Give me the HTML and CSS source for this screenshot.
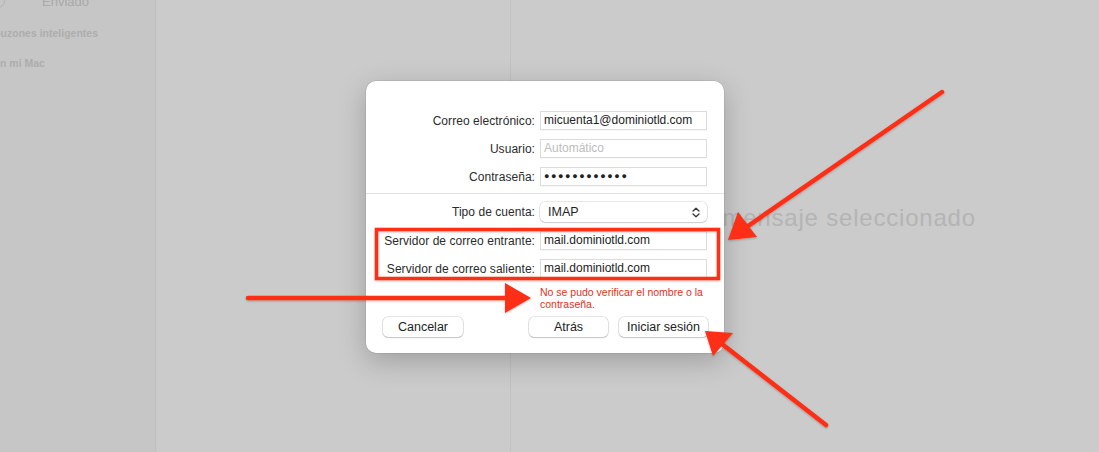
FILE: index.html
```html
<!DOCTYPE html>
<html lang="es">
<head>
  <meta charset="UTF-8">
  <meta name="viewport" content="width=device-width, initial-scale=1.0">
  <title>Mail - Añadir cuenta</title>
  <link rel="stylesheet" href="styles.css">
</head>
<body>
  <div class="app">
    <aside class="sidebar">
      <div class="side-item"><span class="side-icon"></span>Enviado</div>
      <div class="side-head">Buzones inteligentes</div>
      <div class="side-head">En mi Mac</div>
    </aside>
    <section class="list"></section>
    <main class="reader">
      <p class="empty">Ningún mensaje seleccionado</p>
    </main>
  </div>

  <div class="sheet">
    <div class="form form-top">
      <label>Correo electrónico:</label>
      <div class="field">micuenta1@dominiotld.com</div>
      <label>Usuario:</label>
      <div class="field placeholder">Automático</div>
      <label>Contraseña:</label>
      <div class="field dots">●●●●●●●●●●●●</div>
    </div>
    <div class="divider"></div>
    <div class="form form-bottom">
      <label>Tipo de cuenta:</label>
      <div class="select">
        <span>IMAP</span>
        <svg width="8" height="11" viewBox="0 0 8 11">
          <path d="M1 4 L4 1.2 L7 4 M1 7 L4 9.8 L7 7" fill="none" stroke="#333" stroke-width="1.3" stroke-linecap="round" stroke-linejoin="round"/>
        </svg>
      </div>
      <label>Servidor de correo entrante:</label>
      <div class="field">mail.dominiotld.com</div>
      <label>Servidor de correo saliente:</label>
      <div class="field">mail.dominiotld.com</div>
    </div>
    <p class="error">No se pudo verificar el nombre o la<br>contraseña.</p>
    <div class="actions">
      <button>Cancelar</button>
      <span class="spacer"></span>
      <button class="btn-back">Atrás</button>
      <button class="btn-login">Iniciar sesión</button>
    </div>
  </div>

  <!-- anotaciones en rojo -->
  <svg class="marks" width="1099" height="452" viewBox="0 0 1099 452">
    <defs>
      <filter id="sombra" x="-10%" y="-10%" width="120%" height="120%">
        <feDropShadow dx="0" dy="1" stdDeviation="1" flood-color="#000" flood-opacity="0.25"/>
      </filter>
    </defs>
    <g fill="#ff2d12" stroke="#ff2d12" filter="url(#sombra)">
      <rect x="376.5" y="229.5" width="342" height="49" fill="none" stroke-width="3.5"/>
      <line x1="942" y1="92" x2="748" y2="226" stroke-width="4.5" stroke-linecap="round"/>
      <polygon points="728,240 738,212 757,237" stroke="none"/>
      <line x1="248" y1="298" x2="507" y2="298" stroke-width="4.5" stroke-linecap="round"/>
      <polygon points="505,283 531,298 505,313" stroke="none"/>
      <line x1="826" y1="425" x2="722" y2="344" stroke-width="4.5" stroke-linecap="round"/>
      <polygon points="705,331 733,333 713,356" stroke="none"/>
    </g>
  </svg>
</body>
</html>
```

FILE: styles.css
```css
body {
  margin: 0;
  font-family: "Liberation Sans", Arial, sans-serif;
  background-color: #cbcbcb;
  overflow: hidden;
}
.app {
  display: flex;
  height: 452px;
}
.sidebar {
  width: 155px;
  background-color: #c6c6c6;
  border-right: 1px solid #bdbdbd;
  overflow: hidden;
}
.side-item {
  display: flex;
  align-items: center;
  gap: 37px;
  margin-top: -9px;
  margin-left: -9px;
  height: 20px;
  font-size: 13px;
  color: #a9a9a9;
}
.side-icon {
  width: 14px;
  height: 14px;
  border-radius: 50%;
  border: 1.5px solid #b3b3b3;
  box-sizing: border-box;
}
.side-head {
  margin-left: -7px;
  margin-top: 16px;
  font-size: 10.5px;
  font-weight: bold;
  color: #adadad;
}
.side-head + .side-head {
  margin-top: 18px;
}
.list {
  width: 354px;
  border-right: 1px solid #c0c0c0;
}
.reader {
  flex: 1;
  display: flex;
  align-items: center;
  justify-content: center;
  padding-bottom: 16px;
}
.empty {
  margin: 0;
  font-size: 24px;
  letter-spacing: 0.8px;
  color: #b4b4b4;
}

.sheet {
  position: absolute;
  left: 366px;
  top: 81px;
  width: 358px;
  background-color: #ffffff;
  border-radius: 10px;
  box-shadow: 0 0 0 0.5px rgba(0,0,0,0.12), 0 8px 28px rgba(0,0,0,0.22);
  padding-bottom: 16px;
}
.form {
  display: grid;
  grid-template-columns: 1fr 167px;
  column-gap: 5px;
  row-gap: 9px;
  align-items: center;
  padding-right: 17px;
}
.form-top {
  padding-top: 30px;
}
.form-bottom {
  padding-top: 8px;
}
.form label {
  text-align: right;
  font-size: 12px;
  letter-spacing: 0.05px;
  color: #2b2b2b;
  white-space: nowrap;
}
.field {
  height: 19px;
  box-sizing: border-box;
  border: 1px solid #dcdcdc;
  box-shadow: 0 0.5px 0 rgba(0,0,0,0.06);
  padding: 0 3px;
  font-size: 12px;
  line-height: 17px;
  color: #222;
}
.placeholder {
  color: #bdbdbd;
}
.dots {
  font-size: 9px;
  letter-spacing: 1.6px;
  line-height: 17px;
  color: #222;
}
.select {
  height: 20px;
  box-sizing: border-box;
  display: flex;
  align-items: center;
  justify-content: space-between;
  padding: 0 7px 0 8px;
  border-radius: 5px;
  box-shadow: 0 0 0 0.5px rgba(0,0,0,0.18), 0 1px 1.5px rgba(0,0,0,0.12);
  font-size: 12.5px;
  color: #1e1e1e;
}
.divider {
  height: 1px;
  background-color: #e2e2e2;
  margin-top: 7px;
}
.error {
  margin: 8px 0 0 174px;
  font-size: 10.5px;
  line-height: 12px;
  color: #e2311d;
}
.actions {
  display: flex;
  align-items: center;
  gap: 11px;
  margin-top: 7px;
  padding: 0 16px 0 17px;
}
.spacer {
  flex: 1;
}
button {
  height: 20px;
  width: 80px;
  padding: 0;
  border: none;
  border-radius: 5px;
  background-color: #ffffff;
  box-shadow: 0 0 0 0.5px rgba(0,0,0,0.2), 0 1px 1.5px rgba(0,0,0,0.15);
  font-family: "Liberation Sans", Arial, sans-serif;
  font-size: 12.5px;
  color: #222;
}
.btn-back {
  width: 79px;
}
.btn-login {
  width: 89px;
}

.marks {
  position: absolute;
  top: 0;
  left: 0;
  pointer-events: none;
}
```
